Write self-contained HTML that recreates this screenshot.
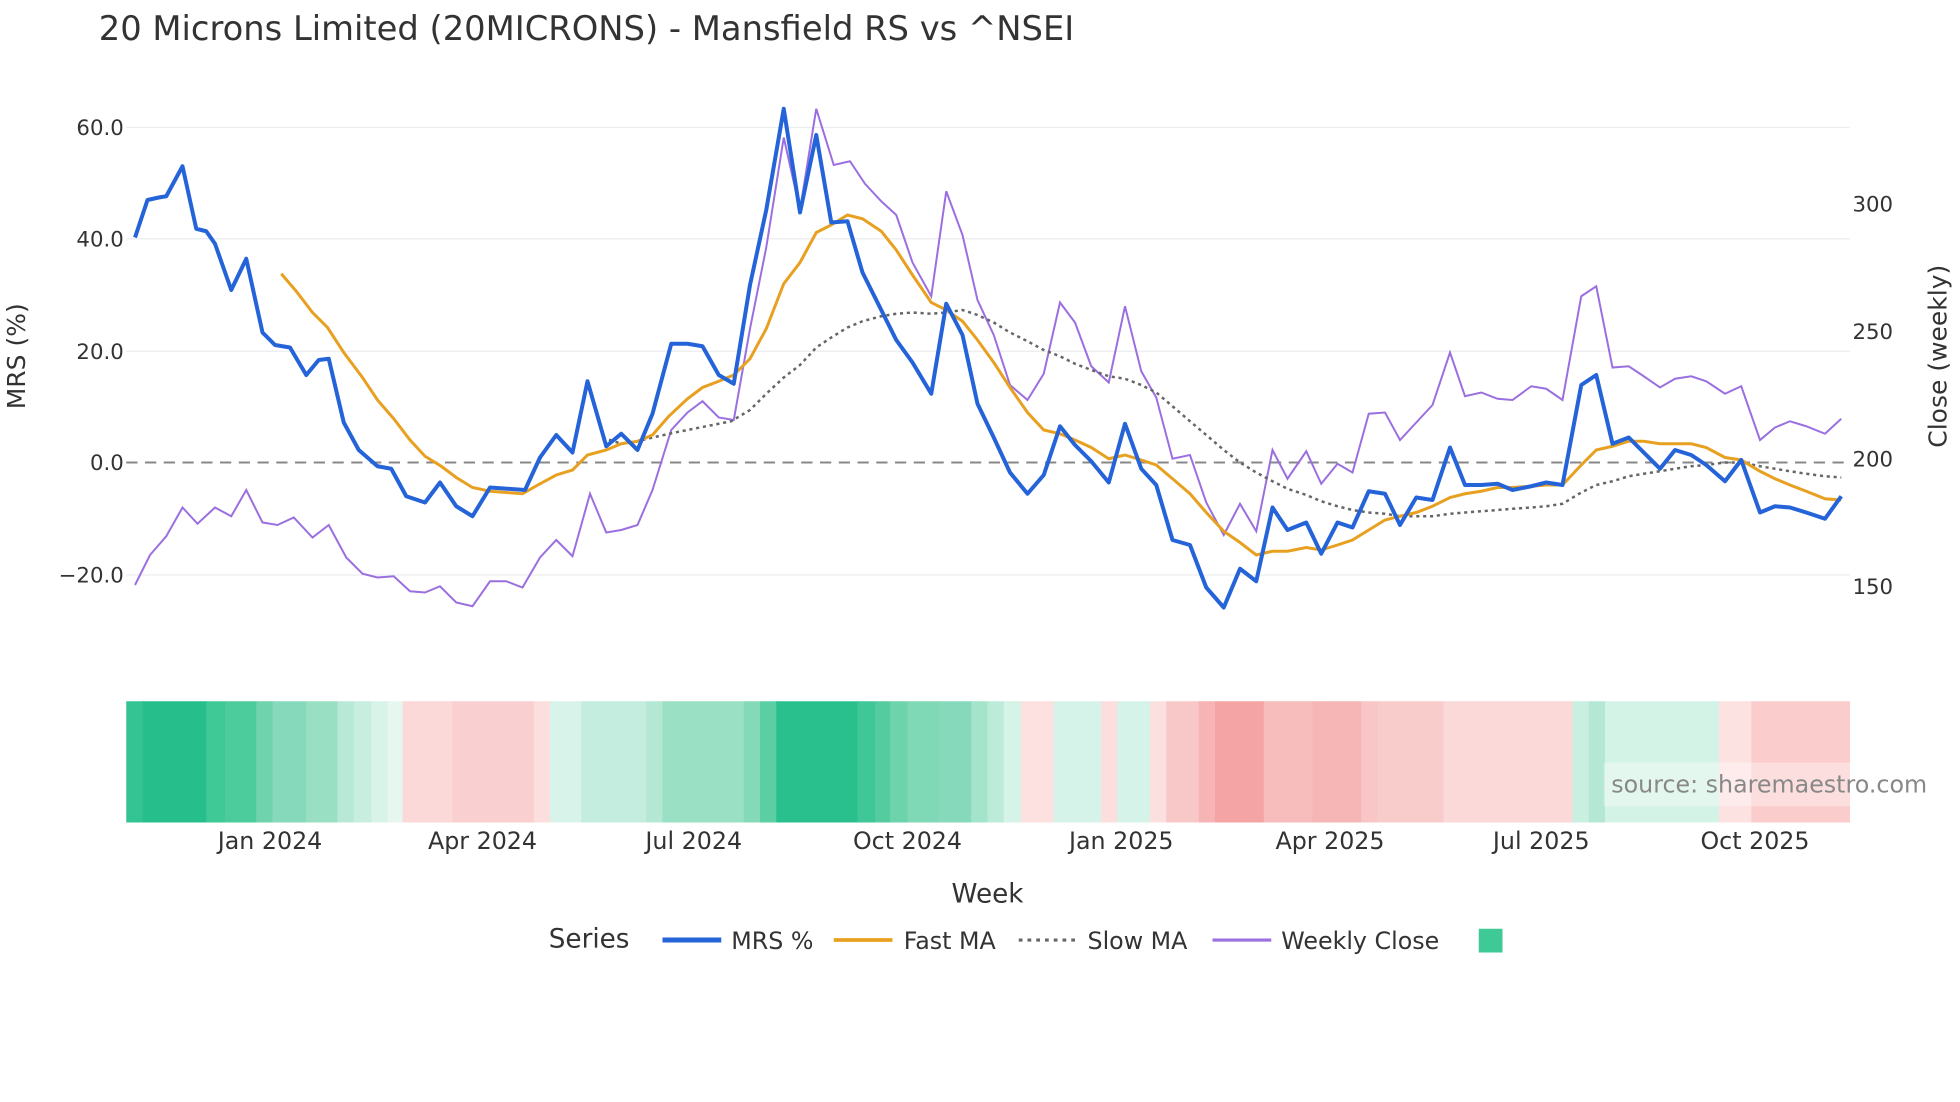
<!DOCTYPE html>
<html><head><meta charset="utf-8"><style>html,body{margin:0;padding:0;background:#fff}svg{display:block}</style></head>
<body>
<svg width="1960" height="1102" viewBox="0 0 1568 881.6" xmlns="http://www.w3.org/2000/svg" font-family="DejaVu Sans, Liberation Sans, sans-serif">
<rect width="1568" height="881.6" fill="#fff"/>
<text x="79" y="32" font-size="27" fill="#333">20 Microns Limited (20MICRONS) - Mansfield RS vs ^NSEI</text>
<g stroke="#ebedf0" stroke-width="1">
<line x1="101" x2="1480" y1="102" y2="102"/><line x1="101" x2="1480" y1="191" y2="191"/><line x1="101" x2="1480" y1="281" y2="281"/><line x1="101" x2="1480" y1="460" y2="460"/>
</g>
<g font-size="17" fill="#333" text-anchor="end">
<text x="99" y="108">60.0</text><text x="99" y="197">40.0</text><text x="99" y="287">20.0</text><text x="99" y="376">0.0</text><text x="99" y="466">−20.0</text>
</g>
<g font-size="17" fill="#333">
<text x="1482" y="169">300</text><text x="1482" y="271">250</text><text x="1482" y="373">200</text><text x="1482" y="475">150</text>
</g>
<text transform="translate(20,285) rotate(-90)" font-size="20" fill="#333" text-anchor="middle">MRS (%)</text>
<text transform="translate(1557,285) rotate(-90)" font-size="20" fill="#333" text-anchor="middle">Close (weekly)</text>
<line x1="101" x2="1480" y1="370" y2="370" stroke="#888" stroke-width="1.6" stroke-dasharray="9,6"/>
<polyline fill="none" stroke="#9b6fe0" stroke-width="1.6" points="108,468 120,444 133,429 146,406 158,419 172,406 185,413 197,392 210,418 222,420 235,414 250,430 263,420 277,446 290,459 302,462 315,461 328,473 340,474 352,469 365,482 378,485 392,465 405,465 418,470 432,446 445,432 458,445 472,395 485,426 497,424 510,420 522,392 537,344 550,330 562,321 575,334 587,336 600,263 613,198 627,110 640,168 653,87 667,132 680,129 692,147 705,161 717,172 730,210 745,237 757,153 770,188 782,240 795,268 808,308 822,320 835,299 848,242 860,258 873,293 887,306 900,245 913,297 925,318 938,367 952,364 965,402 979,428 992,403 1005,425 1018,360 1030,383 1045,361 1057,387 1070,371 1082,378 1095,331 1108,330 1120,352 1133,338 1146,324 1160,282 1172,317 1185,314 1198,319 1210,320 1225,309 1237,311 1250,320 1265,237 1277,229 1290,294 1303,293 1315,301 1328,310 1340,303 1353,301 1365,305 1380,315 1393,309 1408,352 1420,342 1432,337 1445,341 1460,347 1473,335"/>
<polyline fill="none" stroke="#666" stroke-width="2" stroke-dasharray="2.5,3" points="482,350 497,355 510,353 522,350 540,346 560,342 585,337 600,328 613,315 627,302 640,292 653,278 665,270 678,262 690,257 705,253 717,251 730,250 745,251 757,250 770,248 782,252 795,258 808,266 822,273 835,280 848,285 860,291 873,296 887,301 900,303 913,308 925,314 938,325 952,337 965,348 979,360 992,370 1005,378 1018,385 1030,391 1045,396 1057,401 1070,405 1082,408 1095,410 1108,411 1120,413 1133,413 1146,413 1160,411 1172,410 1185,409 1198,408 1210,407 1225,406 1237,405 1250,403 1265,394 1277,388 1290,385 1303,381 1315,379 1328,377 1340,375 1353,373 1365,372 1380,370 1393,370 1408,373 1420,375 1432,377 1445,379 1460,381 1473,382"/>
<polyline fill="none" stroke="#e8a020" stroke-width="2.4" points="225,219 237,233 250,250 262,262 275,282 290,302 302,320 315,335 328,352 340,365 353,373 365,382 378,390 392,393 405,394 418,395 432,387 445,380 458,376 470,364 485,360 497,355 510,353 522,348 535,333 550,319 562,310 575,305 587,300 600,287 613,263 627,227 640,210 653,186 665,180 678,172 690,175 705,185 717,200 730,220 745,242 757,248 770,257 782,272 795,290 808,310 822,330 835,344 848,347 860,352 873,358 887,367 900,364 913,368 925,372 938,383 952,395 965,410 979,425 992,434 1005,444 1018,441 1030,441 1045,438 1057,440 1070,436 1082,432 1095,424 1108,416 1120,413 1133,410 1146,405 1160,398 1172,395 1185,393 1198,390 1210,390 1225,389 1237,388 1250,388 1265,372 1277,360 1290,357 1303,353 1315,353 1328,355 1340,355 1353,355 1365,358 1380,366 1393,368 1408,377 1420,383 1432,388 1445,393 1460,399 1473,400"/>
<polyline fill="none" stroke="#2563d9" stroke-width="3.2" stroke-linejoin="round" points="108,190 118,160 127,158 133,157 146,133 157,183 165,185 172,195 185,232 197,207 210,266 220,276 232,278 245,300 255,288 263,287 275,338 287,360 302,373 313,375 325,397 340,402 352,386 365,405 378,413 392,390 420,392 432,366 445,348 458,362 470,305 485,357 497,347 510,360 522,331 537,275 550,275 562,277 575,300 587,307 600,228 613,168 627,87 640,170 653,108 665,178 678,177 690,218 705,248 717,272 730,290 745,315 757,243 770,268 782,323 795,350 808,378 822,395 835,380 848,341 860,356 873,369 887,386 900,339 913,375 925,388 938,432 952,436 965,470 979,486 992,455 1005,465 1018,406 1030,424 1045,418 1057,443 1070,418 1082,422 1095,393 1108,395 1120,420 1133,398 1146,400 1160,358 1172,388 1185,388 1198,387 1210,392 1225,389 1237,386 1250,388 1265,308 1277,300 1290,355 1303,350 1315,362 1328,375 1340,360 1353,364 1365,372 1380,385 1393,368 1408,410 1420,405 1432,406 1445,410 1460,415 1473,397"/>
<g>
<rect x="101" y="561" width="14" height="97" fill="#34c494"/>
<rect x="114" y="561" width="52" height="97" fill="#26bf8c"/>
<rect x="165" y="561" width="16" height="97" fill="#3ec997"/>
<rect x="180" y="561" width="26" height="97" fill="#4ccb9c"/>
<rect x="205" y="561" width="14" height="97" fill="#6fd4ae"/>
<rect x="218" y="561" width="28" height="97" fill="#86dabb"/>
<rect x="245" y="561" width="26" height="97" fill="#98dfc4"/>
<rect x="270" y="561" width="14" height="97" fill="#b8e9d7"/>
<rect x="283" y="561" width="15" height="97" fill="#c7eedf"/>
<rect x="297" y="561" width="14" height="97" fill="#d8f3e8"/>
<rect x="310" y="561" width="13" height="97" fill="#e6f7ef"/>
<rect x="322" y="561" width="41" height="97" fill="#fbd9d9"/>
<rect x="362" y="561" width="66" height="97" fill="#f9cfcf"/>
<rect x="427" y="561" width="14" height="97" fill="#fcdede"/>
<rect x="440" y="561" width="26" height="97" fill="#d8f3ea"/>
<rect x="465" y="561" width="53" height="97" fill="#c4ede0"/>
<rect x="517" y="561" width="14" height="97" fill="#b4e8d4"/>
<rect x="530" y="561" width="66" height="97" fill="#9ae0c5"/>
<rect x="595" y="561" width="14" height="97" fill="#84dab8"/>
<rect x="608" y="561" width="14" height="97" fill="#5bcfa3"/>
<rect x="621" y="561" width="66" height="97" fill="#29c08d"/>
<rect x="686" y="561" width="15" height="97" fill="#3fc797"/>
<rect x="700" y="561" width="13" height="97" fill="#55cca0"/>
<rect x="712" y="561" width="15" height="97" fill="#6dd3ab"/>
<rect x="726" y="561" width="26" height="97" fill="#7fd9b6"/>
<rect x="751" y="561" width="27" height="97" fill="#86dabb"/>
<rect x="777" y="561" width="14" height="97" fill="#a4e4cb"/>
<rect x="790" y="561" width="14" height="97" fill="#bdebda"/>
<rect x="803" y="561" width="15" height="97" fill="#d5f3e7"/>
<rect x="817" y="561" width="27" height="97" fill="#fde0e0"/>
<rect x="843" y="561" width="39" height="97" fill="#d5f3e8"/>
<rect x="881" y="561" width="14" height="97" fill="#fcdede"/>
<rect x="894" y="561" width="27" height="97" fill="#d5f3e8"/>
<rect x="920" y="561" width="14" height="97" fill="#fce0e0"/>
<rect x="933" y="561" width="27" height="97" fill="#f8c8c8"/>
<rect x="959" y="561" width="14" height="97" fill="#f6b4b4"/>
<rect x="972" y="561" width="40" height="97" fill="#f4a4a4"/>
<rect x="1011" y="561" width="40" height="97" fill="#f7bcbc"/>
<rect x="1050" y="561" width="40" height="97" fill="#f6b6b6"/>
<rect x="1089" y="561" width="14" height="97" fill="#f8c6c6"/>
<rect x="1102" y="561" width="54" height="97" fill="#f9cccc"/>
<rect x="1155" y="561" width="104" height="97" fill="#fbd9d9"/>
<rect x="1258" y="561" width="14" height="97" fill="#c9efe0"/>
<rect x="1271" y="561" width="14" height="97" fill="#b4e8d4"/>
<rect x="1284" y="561" width="92" height="97" fill="#d4f3e7"/>
<rect x="1375" y="561" width="27" height="97" fill="#fde2e2"/>
<rect x="1401" y="561" width="79" height="97" fill="#fbcccc"/>
</g>
<rect x="1283" y="610" width="197" height="35" fill="#fff" opacity="0.35"/>
<text x="1289" y="634" font-size="19" fill="#888">source: sharemaestro.com</text>
<g font-size="19" fill="#333" text-anchor="middle">
<text x="216" y="679">Jan 2024</text><text x="386" y="679">Apr 2024</text><text x="555" y="679">Jul 2024</text><text x="726" y="679">Oct 2024</text><text x="897" y="679">Jan 2025</text><text x="1064" y="679">Apr 2025</text><text x="1233" y="679">Jul 2025</text><text x="1404" y="679">Oct 2025</text>
</g>
<text x="790" y="722" font-size="21" fill="#333" text-anchor="middle">Week</text>
<text x="439" y="758" font-size="21" fill="#333">Series</text>
<line x1="530" x2="577" y1="752" y2="752" stroke="#2563d9" stroke-width="4"/>
<text x="585" y="759" font-size="19" fill="#333">MRS %</text>
<line x1="667" x2="714" y1="752" y2="752" stroke="#e8a020" stroke-width="3"/>
<text x="723" y="759" font-size="19" fill="#333">Fast MA</text>
<line x1="815" x2="860" y1="752" y2="752" stroke="#666" stroke-width="2.5" stroke-dasharray="3,4"/>
<text x="870" y="759" font-size="19" fill="#333">Slow MA</text>
<line x1="970" x2="1017" y1="752" y2="752" stroke="#9b6fe0" stroke-width="2.5"/>
<text x="1025" y="759" font-size="19" fill="#333">Weekly Close</text>
<rect x="1183" y="743" width="19" height="19" fill="#3ec997"/>
</svg>
</body></html>
